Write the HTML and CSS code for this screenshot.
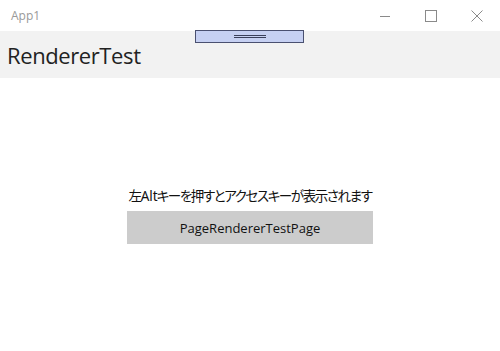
FILE: index.html
```html
<!DOCTYPE html>
<html lang="ja">
<head>
    <meta charset="UTF-8">
    <meta name="viewport" content="width=device-width, initial-scale=1.0">
    <title>App1</title>
    <link rel="stylesheet" href="styles.css">
</head>
<body>
    <div class="window">
        <header class="title-bar">
            <span class="app-name">App1</span>
            <div class="caption-btns">
                <div class="caption-btn">
                    <svg width="12" height="12" viewBox="0 0 12 12"><path d="M1 6.5h10" stroke="#8a8a8a" stroke-width="1" fill="none"/></svg>
                </div>
                <div class="caption-btn">
                    <svg width="12" height="12" viewBox="0 0 12 12"><rect x="0.5" y="0.5" width="11" height="11" stroke="#8a8a8a" stroke-width="1" fill="none"/></svg>
                </div>
                <div class="caption-btn">
                    <svg width="12" height="12" viewBox="0 0 12 12"><path d="M0.5 0.5l11 11M11.5 0.5l-11 11" stroke="#8a8a8a" stroke-width="1" fill="none"/></svg>
                </div>
            </div>
        </header>
        <section class="page-header">
            <h1>RendererTest</h1>
            <div class="drag-handle"><span></span></div>
        </section>
        <main class="page-body">
            <p class="hint">左<span class="latin">Alt</span>キーを押すとアクセスキーが表示されます</p>
            <button class="page-btn">PageRendererTestPage</button>
        </main>
    </div>
</body>
</html>
```

FILE: styles.css
```css
*{margin:0; padding:0; box-sizing: border-box}
html, body{width: 500px; height: 351px; overflow: hidden; background: #fff;}
body{font-family: "Open Sans", "Noto Sans CJK JP", sans-serif; color: #000;}
.window{display: flex; flex-direction: column; height: 351px;}
.title-bar{display: flex; height: 31px; align-items: center; justify-content: space-between;}
.app-name{font-size: 12px; color: #999; padding-left: 11px;}
.caption-btns{display: flex; height: 100%;}
.caption-btn{width: 46px; height: 31px; display: flex; align-items: center; justify-content: center;}
.page-header{position: relative; height: 47px; background: #f2f2f2; display: flex; align-items: center; padding-left: 7px;}
.page-header h1{font-size: 22px; font-weight: 400; color: #222; letter-spacing: -0.4px;}
.drag-handle{position: absolute; left: 195px; top: -1px; width: 109px; height: 13px; background: #c6d0f2; border: 1px solid #4a5070; display: flex; align-items: center; justify-content: center;}
.drag-handle span{width: 32px; height: 3px; border-top: 1px solid #3a3f5a; border-bottom: 1px solid #3a3f5a;}
.page-body{flex: 1; display: flex; flex-direction: column; align-items: center; justify-content: center; padding-top: 2px;}
.hint{font-family: "Noto Sans", "Noto Sans CJK JP", sans-serif; font-size: 13.5px; line-height: 19px; color: #111; margin-bottom: 5px; font-feature-settings: "palt"; letter-spacing: -1.4px;}
.hint .latin{letter-spacing: 0; margin-right: -1px;}
.page-btn{width: 246px; height: 33px; border: none; background: #cccccc; font-family: inherit; font-size: 13px; color: #111;}
```
